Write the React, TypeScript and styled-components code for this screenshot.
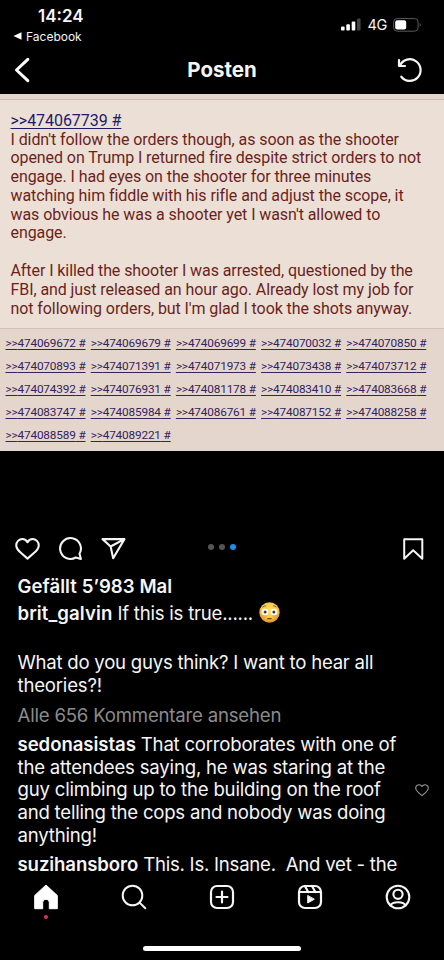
import React from 'react';
import styled, { createGlobalStyle } from 'styled-components';

const GlobalStyle = createGlobalStyle`
  * { box-sizing: border-box; }
  body { margin: 0; background: #000; }
`;

const Screen = styled.main`
  width: 444px;
  height: 960px;
  display: flex;
  flex-direction: column;
  overflow: hidden;
  background: #000;
  color: #f5f5f5;
  font-family: Inter, 'Liberation Sans', sans-serif;
  svg { display: block; flex: none; }
`;

const StatusBar = styled.header`
  height: 47px;
  display: flex;
  justify-content: space-between;
`;

const ClockColumn = styled.div`
  padding: 6px 0 0 12px;
  display: flex;
  flex-direction: column;
`;

const Clock = styled.time`
  padding-left: 26px;
  font-size: 17px;
  line-height: 21px;
  font-weight: 600;
  letter-spacing: 0;
`;

const BackToApp = styled.div`
  display: flex;
  align-items: center;
  gap: 4px;
  height: 18px;
  padding-left: 1px;
  font-size: 12px;
  font-weight: 400;
  letter-spacing: 0;
`;

const Indicators = styled.div`
  display: flex;
  align-items: center;
  height: 26px;
  margin: 11.5px 22px 0 0;
`;

const Network = styled.span`
  margin: 0 6px 0 6px;
  font-size: 14.5px;
  letter-spacing: -0.3px;
`;

const TitleBar = styled.nav`
  height: 47px;
  display: grid;
  grid-template-columns: 60px 1fr 60px;
  align-items: center;
`;

const Title = styled.h1`
  margin: -2px 0 0;
  text-align: center;
  font-size: 20.5px;
  font-weight: 700;
  letter-spacing: 0;
`;

const BackSlot = styled.div`
  padding-left: 14px;
  margin-top: -2px;
`;

const RefreshSlot = styled.div`
  padding-left: 12px;
  margin-top: -1px;
`;

const Photo = styled.section`
  height: 357px;
  flex: none;
  display: flex;
  flex-direction: column;
  background: #e5d6cd;
  font-family: Roboto, 'Liberation Sans', sans-serif;
`;

const PostCard = styled.article`
  height: 230px;
  margin-top: 5px;
  padding: 10.5px 10.5px 0;
  border-top: 1px solid #cdbab2;
  border-bottom: 1px solid #d2c0b8;
  background: #ece0d6;
  color: #6b1f1c;
  font-size: 16px;
`;

const Line = styled.div<{ $spacing?: number; $height?: number }>`
  height: ${(p) => p.$height ?? 18.8}px;
  line-height: ${(p) => p.$height ?? 18.8}px;
  letter-spacing: ${(p) => p.$spacing ?? -0.08}px;
  white-space: pre;
`;

const QuoteLink = styled.a`
  color: #211a68;
  text-decoration: underline;
  text-decoration-thickness: 1px;
  text-underline-offset: 2px;
`;

const Replies = styled.div`
  display: grid;
  grid-template-columns: repeat(5, 85.2px);
  grid-auto-rows: 23px;
  align-items: center;
  padding: 2.5px 0 0 5.5px;
  font-size: 11.8px;
  letter-spacing: -0.17px;
  white-space: nowrap;
  ${QuoteLink} { color: #33235f; }
`;

const Actions = styled.div`
  height: 28px;
  margin: 84px 20px 0 15px;
  flex: none;
  display: grid;
  grid-template-columns: 1fr auto 1fr;
  align-items: center;
`;

const ActionGroup = styled.div`
  display: flex;
  gap: 18px;
  align-items: center;
  margin-top: -1px;
`;

const SaveSlot = styled.div`
  justify-self: end;
`;

const Dots = styled.div`
  display: flex;
  gap: 4.5px;
  margin: -4px 0 0 4.5px;
`;

const Dot = styled.i<{ $active?: boolean }>`
  width: 6.5px;
  height: 6.5px;
  border-radius: 50%;
  background: ${(p) => (p.$active ? '#1890ec' : '#555')};
`;

const Feed = styled.section`
  height: 308px;
  flex: none;
  overflow: hidden;
  padding: 12px 14px 0 17.5px;
  font-size: 18.6px;
`;

const Name = styled.b<{ $spacing?: number }>`
  font-weight: 600;
  letter-spacing: ${(p) => p.$spacing ?? -0.06}px;
`;

const Caption = styled.div`
  margin-top: 3.5px;
`;

const Flushed = styled.span`
  display: inline-block;
  vertical-align: middle;
  margin: -3px 0 0 6.5px;
`;

const Gap = styled.div<{ $size: number }>`
  height: ${(p) => p.$size}px;
`;

const AllComments = styled.div`
  margin: 7.3px 0 7px;
  color: #8b8b8b;
`;

const Comment = styled.div`
  display: flex;
  align-items: center;
  justify-content: space-between;
  margin-bottom: 7.2px;
  padding-right: 1px;
`;

const TabBar = styled.nav`
  height: 89px;
  flex: none;
  display: flex;
  flex-direction: column;
  align-items: center;
`;

const Tabs = styled.div`
  width: 440px;
  height: 52px;
  margin-bottom: 22.5px;
  display: grid;
  grid-template-columns: repeat(5, 1fr);
  align-items: center;
  justify-items: center;
`;

const Tab = styled.div`
  position: relative;
`;

const Badge = styled.i`
  position: absolute;
  top: 31px;
  left: 11px;
  width: 4px;
  height: 4px;
  border-radius: 50%;
  background: #e0354a;
`;

const HomeIndicator = styled.div`
  width: 158px;
  height: 5.5px;
  border-radius: 3px;
  background: #fff;
`;

const post = [
  "I didn't follow the orders though, as soon as the shooter",
  'opened on Trump I returned fire despite strict orders to not',
  'engage. I had eyes on the shooter for three minutes',
  'watching him fiddle with his rifle and adjust the scope, it',
  "was obvious he was a shooter yet I wasn't allowed to",
  'engage.',
  '',
  'After I killed the shooter I was arrested, questioned by the',
  'FBI, and just released an hour ago. Already lost my job for',
  "not following orders, but I'm glad I took the shots anyway.",
];

const replies = [
  474069672, 474069679, 474069699, 474070032, 474070850,
  474070893, 474071391, 474071973, 474073438, 474073712,
  474074392, 474076931, 474081178, 474083410, 474083668,
  474083747, 474085984, 474086761, 474087152, 474088258,
  474088589, 474089221,
];

const stroke = { fill: 'none', stroke: '#f5f5f5', strokeLinecap: 'round', strokeLinejoin: 'round' } as const;

const heartPath =
  'M16.8 3.9c-2.2 0-3.8 1.3-4.8 3.1-1-1.8-2.6-3.1-4.8-3.1A6 6 0 0 0 1.2 10c0 3.2 2.1 5.1 4.7 7.4 1.7 1.5 3.7 3.2 6.1 5.3 2.4-2.1 4.4-3.8 6.1-5.3 2.6-2.3 4.7-4.2 4.7-7.4a6 6 0 0 0-6-6.1Z';

const Heart = ({ size, color, width }: { size: number; color: string; width: number }) => (
  <svg width={size} height={size} viewBox="0 1 24 24" {...stroke} stroke={color} strokeWidth={width}>
    <path d={heartPath} />
  </svg>
);

const FlushedFace = () => (
  <svg width="21" height="21" viewBox="0 0 21 21">
    <defs>
      <radialGradient id="skin" cx="50%" cy="38%" r="62%">
        <stop offset="0" stopColor="#ffe06a" />
        <stop offset="0.65" stopColor="#f7c648" />
        <stop offset="1" stopColor="#d98f28" />
      </radialGradient>
    </defs>
    <circle cx="10.5" cy="10.5" r="10.2" fill="url(#skin)" />
    <ellipse cx="4.5" cy="14" rx="3" ry="2" fill="#ef8f3c" opacity=".45" />
    <ellipse cx="16.5" cy="14" rx="3" ry="2" fill="#ef8f3c" opacity=".45" />
    <circle cx="6" cy="10" r="3.3" fill="#fff" />
    <circle cx="15" cy="10" r="3.3" fill="#fff" />
    <circle cx="6.1" cy="10" r="1.5" fill="#4b3528" />
    <circle cx="14.9" cy="10" r="1.5" fill="#4b3528" />
    <path d="M3.5 5.3 Q5 3.7 7 3.8 M14 3.8 Q16 3.7 17.5 5.3" fill="none" stroke="#8a561c" strokeWidth=".9" />
    <path d="M8.7 16.6H12.3" stroke="#7b4219" strokeWidth="1.1" strokeLinecap="round" />
  </svg>
);

export default function App() {
  return (
    <Screen>
      <GlobalStyle />
      <StatusBar>
        <ClockColumn>
          <Clock>14:24</Clock>
          <BackToApp>
            <svg width="9" height="8" viewBox="0 0 9 8"><path d="M.5 4 8.5 .3V7.7Z" fill="#fff" /></svg>
            Facebook
          </BackToApp>
        </ClockColumn>
        <Indicators>
          <svg width="20" height="13" viewBox="0 0 20 13" fill="#fff">
            <rect x="0" y="8.5" width="3.6" height="4" rx="1" />
            <rect x="5.3" y="6.3" width="3.6" height="6.2" rx="1" />
            <rect x="10.7" y="3.5" width="3.6" height="9" rx="1" />
            <rect x="16" y=".5" width="3.6" height="12" rx="1" fill="#444" />
          </svg>
          <Network>4G</Network>
          <svg width="29" height="14" viewBox="0 0 29 14">
            <rect x=".6" y=".6" width="24.5" height="12.6" rx="3.5" fill="none" stroke="#5a5a5a" />
            <rect x="2.2" y="2.2" width="11" height="9.4" rx="2" fill="#fff" />
            <path d="M26.7 4.7q2.2 2.2 0 4.5Z" fill="#5a5a5a" />
          </svg>
        </Indicators>
      </StatusBar>

      <TitleBar>
        <BackSlot>
          <svg width="17" height="26" viewBox="0 0 17 26" {...stroke} stroke="#fff" strokeWidth="3">
            <path d="M13.8 2.3 2.5 13 13.8 23.7" />
          </svg>
        </BackSlot>
        <Title>Posten</Title>
        <RefreshSlot>
          <svg width="28" height="28" viewBox="0 0 28 28" {...stroke} strokeWidth="2.2">
            <path d="M4 9.500A10.8 10.8 0 1 1 5.3 20.7M3 4V10H9" />
          </svg>
        </RefreshSlot>
      </TitleBar>

      <Photo>
        <PostCard>
          <Line $height={20} $spacing={-0.05}><QuoteLink>&gt;&gt;474067739 #</QuoteLink></Line>
          {post.map((text, i) => (
            <Line key={i}>{text}</Line>
          ))}
        </PostCard>
        <Replies>
          {replies.map((id) => (
            <span key={id}><QuoteLink>&gt;&gt;{id} #</QuoteLink></span>
          ))}
        </Replies>
      </Photo>

      <Actions>
        <ActionGroup>
          <Heart size={25} color="#f5f5f5" width={2} />
          <svg width="25" height="25" viewBox="0 0 24 24" {...stroke} strokeWidth="2">
            <path d="M20.656 17.008a9.993 9.993 0 1 0-3.59 3.615L22 22Z" />
          </svg>
          <svg width="25" height="25" viewBox="0 0 24 24" {...stroke} strokeWidth="2">
            <path d="M22.5 3 9.218 10.083M11.698 21.3 22.5 3 1.5 3 9.218 10.084Z" />
          </svg>
        </ActionGroup>
        <Dots><Dot /><Dot /><Dot $active /></Dots>
        <SaveSlot>
          <svg width="22" height="24" viewBox="0 0 22 24" {...stroke} strokeWidth="2">
            <path d="M2.2 2.2H20.3V21.8L11.2 13.3 2.2 21.8Z" />
          </svg>
        </SaveSlot>
      </Actions>

      <Feed>
        <Line $height={23}><Name $spacing={0.05}>Gefällt 5’983 Mal</Name></Line>
        <Caption>
          <Line $height={23} $spacing={-0.23}><Name $spacing={0.1}>brit_galvin</Name> If this is true......<Flushed><FlushedFace /></Flushed></Line>
          <Gap $size={26.7} />
          <Line $height={22.6} $spacing={-0.25}>What do you guys think? I want to hear all</Line>
          <Line $height={22.6} $spacing={-0.2}>theories?!</Line>
        </Caption>
        <AllComments>
          <Line $height={22.6} $spacing={-0.2}>Alle 656 Kommentare ansehen</Line>
        </AllComments>
        <Comment>
          <div>
            <Line $height={22.6} $spacing={-0.22}><Name>sedonasistas</Name> That corroborates with one of</Line>
            <Line $height={22.6} $spacing={-0.2}>the attendees saying, he was staring at the</Line>
            <Line $height={22.6} $spacing={-0.2}>guy climbing up to the building on the roof</Line>
            <Line $height={22.6} $spacing={-0.23}>and telling the cops and nobody was doing</Line>
            <Line $height={22.6} $spacing={-0.2}>anything!</Line>
          </div>
          <Heart size={14} color="#999" width={1.8} />
        </Comment>
        <Line $height={22.6} $spacing={-0.24}><Name $spacing={-0.1}>suzihansboro</Name> This. Is. Insane.  And yet - the</Line>
      </Feed>

      <TabBar>
        <Tabs>
          <Tab>
            <svg width="26" height="26" viewBox="0 0 26 26">
              <path d="M13 1 24.3 11.500V24.7H16.3V18.500a3.3 3.3 0 0 0-6.6 0V24.7H1.7V11.5Z" fill="#fff" stroke="#fff" strokeLinejoin="round" />
            </svg>
            <Badge />
          </Tab>
          <Tab>
            <svg width="26" height="26" viewBox="0 0 26 26" {...stroke} strokeWidth="2">
              <circle cx="11.5" cy="11.5" r="9.8" /><path d="M18.6 18.6 24.3 24.3" />
            </svg>
          </Tab>
          <Tab>
            <svg width="26" height="26" viewBox="0 0 26 26" {...stroke} strokeWidth="2.2">
              <rect x="2" y="2" width="22" height="22" rx="6" /><path d="M13 7.500V18.5M7.5 13H18.5" />
            </svg>
          </Tab>
          <Tab>
            <svg width="26" height="26" viewBox="0 0 26 26" {...stroke} strokeWidth="2.2">
              <rect x="2" y="2" width="22" height="22" rx="6" />
              <path d="M2 8H24M8 2.3 11.3 8M15 2 18.3 8" />
              <path d="M10.7 11.800V19L17 15.4Z" fill="#f5f5f5" strokeWidth="1" />
            </svg>
          </Tab>
          <Tab>
            <svg width="26" height="26" viewBox="0 0 26 26" {...stroke} strokeWidth="2.1">
              <circle cx="13" cy="13" r="11.3" /><circle cx="13" cy="10.3" r="4.6" />
              <path d="M5.3 21.500C6.5 19 8.5 18.3 13 18.3S19.5 19 20.7 21.5" />
            </svg>
          </Tab>
        </Tabs>
        <HomeIndicator />
      </TabBar>
    </Screen>
  );
}
